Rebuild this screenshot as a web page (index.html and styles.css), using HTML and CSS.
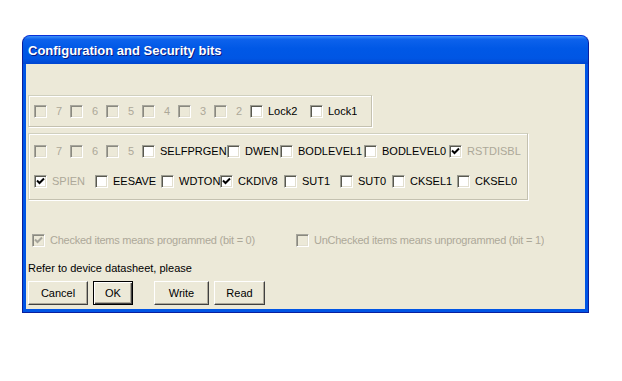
FILE: index.html
```html
<!DOCTYPE html>
<html lang="en">
<head>
  <meta charset="UTF-8">
  <title>Configuration and Security bits</title>
  <link rel="stylesheet" href="styles.css">
</head>
<body>

<div class="window">
  <div class="titlebar">Configuration and Security bits</div>

  <div class="client">

    <!-- Lock bits -->
    <div class="group group-lock">
      <label class="item w36 off"><span class="cb"></span><span class="txt num">7</span></label>
      <label class="item w36 off"><span class="cb"></span><span class="txt num">6</span></label>
      <label class="item w36 off"><span class="cb"></span><span class="txt num">5</span></label>
      <label class="item w36 off"><span class="cb"></span><span class="txt num">4</span></label>
      <label class="item w36 off"><span class="cb"></span><span class="txt num">3</span></label>
      <label class="item w36 off"><span class="cb"></span><span class="txt num">2</span></label>
      <label class="item w60"><span class="cb"></span><span class="txt">Lock2</span></label>
      <label class="item"><span class="cb"></span><span class="txt">Lock1</span></label>
    </div>

    <!-- Fuse bits -->
    <div class="group group-fuse">
      <div class="row">
        <label class="item w36 off"><span class="cb"></span><span class="txt num">7</span></label>
        <label class="item w36 off"><span class="cb"></span><span class="txt num">6</span></label>
        <label class="item w36 off"><span class="cb"></span><span class="txt num">5</span></label>
        <label class="item w85"><span class="cb"></span><span class="txt">SELFPRGEN</span></label>
        <label class="item w53"><span class="cb"></span><span class="txt">DWEN</span></label>
        <label class="item w84"><span class="cb"></span><span class="txt">BODLEVEL1</span></label>
        <label class="item w85"><span class="cb"></span><span class="txt">BODLEVEL0</span></label>
        <label class="item dim"><span class="cb on"><svg width="11" height="11" viewBox="0 0 11 11"><path d="M2 4.5 L4.5 7 L9 2.5" /></svg></span><span class="txt">RSTDISBL</span></label>
      </div>
      <div class="row">
        <label class="item w61 dim"><span class="cb on"><svg width="11" height="11" viewBox="0 0 11 11"><path d="M2 4.5 L4.5 7 L9 2.5" /></svg></span><span class="txt">SPIEN</span></label>
        <label class="item w66"><span class="cb"></span><span class="txt">EESAVE</span></label>
        <label class="item w59"><span class="cb"></span><span class="txt">WDTON</span></label>
        <label class="item w64"><span class="cb on"><svg width="11" height="11" viewBox="0 0 11 11"><path d="M2 4.5 L4.5 7 L9 2.5" /></svg></span><span class="txt">CKDIV8</span></label>
        <label class="item w56"><span class="cb"></span><span class="txt">SUT1</span></label>
        <label class="item w52"><span class="cb"></span><span class="txt">SUT0</span></label>
        <label class="item w65"><span class="cb"></span><span class="txt">CKSEL1</span></label>
        <label class="item"><span class="cb"></span><span class="txt">CKSEL0</span></label>
      </div>
    </div>

    <!-- Legend -->
    <div class="legend">
      <label class="item w264 off"><span class="cb on"><svg width="11" height="11" viewBox="0 0 11 11"><path d="M2 4.5 L4.5 7 L9 2.5" /></svg></span><span class="txt">Checked items means programmed (bit = 0)</span></label>
      <label class="item off"><span class="cb"></span><span class="txt">UnChecked items means unprogrammed (bit = 1)</span></label>
    </div>

    <div class="note">Refer to device datasheet, please</div>

    <div class="buttons">
      <button class="btn btn-cancel">Cancel</button>
      <button class="btn btn-ok default">OK</button>
      <button class="btn btn-write">Write</button>
      <button class="btn btn-read">Read</button>
    </div>

  </div>
</div>

</body>
</html>
```

FILE: styles.css
```css
body {
  margin: 0;
  padding: 35px 0 0 22px;
  background: #fff;
  font-family: "Liberation Sans", Arial, sans-serif;
  font-size: 11px;
  color: #000;
}

.window {
  width: 567px;
  height: 278px;
  box-sizing: border-box;
  display: flex;
  flex-direction: column;
  background: #0055e5;
  border: 1px solid #0a1f9e;
  border-top-color: #0831d9;
  border-radius: 8px 8px 0 0;
  overflow: hidden;
}

.titlebar {
  height: 28px;
  flex: none;
  box-sizing: border-box;
  padding: 7px 0 0 5px;
  color: #fff;
  font-weight: bold;
  font-size: 13px;
  text-shadow: 1px 1px 0 #0a1a80;
  background: linear-gradient(#3d8ff8 0, #0d62ec 12%, #0058e6 45%, #0056e4 80%, #0045d0 100%);
}

.client {
  flex: 1;
  margin: 0 3px 3px 3px;
  background: #ece9d8;
  padding: 31px 0 0 2px;
  display: flex;
  flex-direction: column;
  align-items: flex-start;
}

/* etched group boxes */
.group {
  box-sizing: border-box;
  border: 1px solid #d0d0bf;
  border-right-color: #c4c1b0;
  border-bottom-color: #c4c1b0;
  box-shadow: 1px 1px 0 #fff, inset 1px 1px 0 #fff;
  padding-left: 5px;
}

.group-lock {
  width: 344px;
  height: 32px;
  display: flex;
  align-items: center;
}

.group-fuse {
  width: 500px;
  height: 67px;
  margin-top: 6px;
  padding-top: 7px;
  display: flex;
  flex-direction: column;
  gap: 10px;
}

.row {
  display: flex;
  align-items: center;
  height: 20px;
}

.item {
  display: flex;
  align-items: center;
  flex: none;
  white-space: nowrap;
  overflow: hidden;
}

.w36 { width: 36px; }
.w52 { width: 52px; }
.w53 { width: 53px; }
.w56 { width: 56px; }
.w59 { width: 59px; }
.w60 { width: 60px; }
.w61 { width: 61px; }
.w64 { width: 64px; }
.w65 { width: 65px; }
.w66 { width: 66px; }
.w84 { width: 84px; }
.w85 { width: 85px; }
.w264 { width: 264px; }

.txt {
  margin-left: 5px;
}
.txt.num {
  margin-left: 9px;
}

/* classic sunken checkbox */
.cb {
  width: 13px;
  height: 13px;
  flex: none;
  box-sizing: border-box;
  border: 1px solid;
  border-color: #9d9d92 #fff #fff #9d9d92;
  box-shadow: inset 1px 1px 0 #595950, inset -1px -1px 0 #e2dfd0;
  background: #fff;
  display: flex;
  align-items: center;
  justify-content: center;
}

.cb svg path {
  fill: none;
  stroke: #000;
  stroke-width: 2;
}

.off .txt,
.dim .txt {
  color: #aca899;
}
.off .cb {
  background: #ece9d8;
  border-color: #a7a69c #fff #fff #a7a69c;
  box-shadow: inset 1px 1px 0 #8a897f, inset -1px -1px 0 #e2dfd0;
}
.off .cb svg path {
  stroke: #a7a69c;
}

.legend {
  display: flex;
  align-items: center;
  height: 20px;
  margin: 30px 0 0 4px;
}

.legend .txt {
  letter-spacing: -0.25px;
}

.note {
  margin-top: 11px;
  line-height: 14px;
}

.buttons {
  display: flex;
  margin-top: 6px;
}

.btn {
  height: 24px;
  box-sizing: border-box;
  font-family: inherit;
  font-size: 11px;
  color: #000;
  background: #ece9d8;
  border: 1px solid;
  border-color: #fff #404040 #404040 #fff;
  box-shadow: inset -1px -1px 0 #aca899;
  padding: 0;
  cursor: pointer;
}

.btn.default {
  border: 1px solid #000;
  box-shadow: inset 1px 1px 0 #fff, inset -1px -1px 0 #404040, inset -2px -2px 0 #aca899;
}

.btn-cancel { width: 60px; }
.btn-ok { width: 40px; margin-left: 5px; }
.btn-write { width: 55px; margin-left: 21px; }
.btn-read { width: 51px; margin-left: 5px; }
```
